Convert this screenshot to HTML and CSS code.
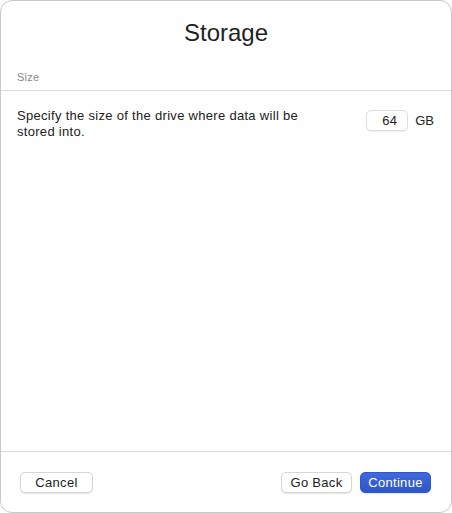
FILE: index.html
```html
<!DOCTYPE html>
<html lang="en">
<head>
<meta charset="utf-8">
<title>Storage</title>
<link rel="stylesheet" href="styles.css">
</head>
<body>
<div class="window">
  <header class="header">
    <h1 class="title">Storage</h1>
    <div class="section-label">Size</div>
  </header>
  <main class="content">
    <div class="row">
      <p class="desc">Specify the size of the drive where data will be stored into.</p>
      <div class="field">
        <input class="num" type="text" value="64">
        <span class="unit">GB</span>
      </div>
    </div>
  </main>
  <footer class="footer">
    <button class="btn btn-cancel" type="button">Cancel</button>
    <div class="spacer"></div>
    <button class="btn" type="button">Go Back</button>
    <button class="btn btn-primary" type="button">Continue</button>
  </footer>
</div>
</body>
</html>
```

FILE: styles.css
```css
* { box-sizing: border-box; }
html, body {
  margin: 0;
  padding: 0;
  background: #ffffff;
}
body {
  font-family: "Liberation Sans", Arial, sans-serif;
  color: #222222;
}
.window {
  width: 452px;
  height: 513px;
  border: 1px solid #c9c9c9;
  border-radius: 12px;
  background: #ffffff;
  display: flex;
  flex-direction: column;
  overflow: hidden;
}
.header {
  border-bottom: 1px solid #dcdcdc;
  padding: 18px 16px 6px;
}
.title {
  margin: 0;
  font-size: 24px;
  line-height: 28px;
  font-weight: normal;
  text-align: center;
  color: #1f1f1f;
}
.section-label {
  margin-top: 24px;
  font-size: 11px;
  line-height: 13px;
  letter-spacing: 0.2px;
  color: #888888;
}
.content {
  flex: 1;
  padding: 17px 17px 0 16px;
}
.row {
  display: flex;
  align-items: flex-start;
}
.desc {
  flex: 1;
  margin: 0;
  padding-right: 40px;
  font-size: 13px;
  line-height: 16px;
  letter-spacing: 0.3px;
  color: #222222;
}
.field {
  display: flex;
  align-items: center;
  gap: 7px;
  margin-top: 2px;
}
.num {
  width: 42px;
  height: 21px;
  border: 1px solid #dedede;
  border-radius: 5px;
  padding: 0 10px 0 0;
  text-align: right;
  font-family: "Liberation Sans", Arial, sans-serif;
  font-size: 13px;
  letter-spacing: 0.3px;
  color: #222222;
  background: #ffffff;
  box-shadow: 0 1px 1px rgba(0,0,0,0.06);
  outline: none;
}
.unit {
  font-size: 13px;
  color: #222222;
}
.footer {
  border-top: 1px solid #dcdcdc;
  height: 61px;
  padding: 20px 20px 0 19px;
  display: flex;
  align-items: flex-start;
  gap: 8px;
}
.spacer { flex: 1; }
.btn {
  height: 21px;
  width: 71px;
  padding: 0;
  border: 1px solid #d6d6d6;
  border-radius: 5px;
  background: #ffffff;
  box-shadow: 0 1px 1px rgba(0,0,0,0.10);
  font-family: "Liberation Sans", Arial, sans-serif;
  font-size: 13px;
  line-height: 19px;
  letter-spacing: 0.3px;
  color: #222222;
}
.btn-cancel { width: 73px; }
.btn-primary {
  border-color: #3158c9;
  background: linear-gradient(#4168dc, #2f56c9);
  color: #ffffff;
}
```
